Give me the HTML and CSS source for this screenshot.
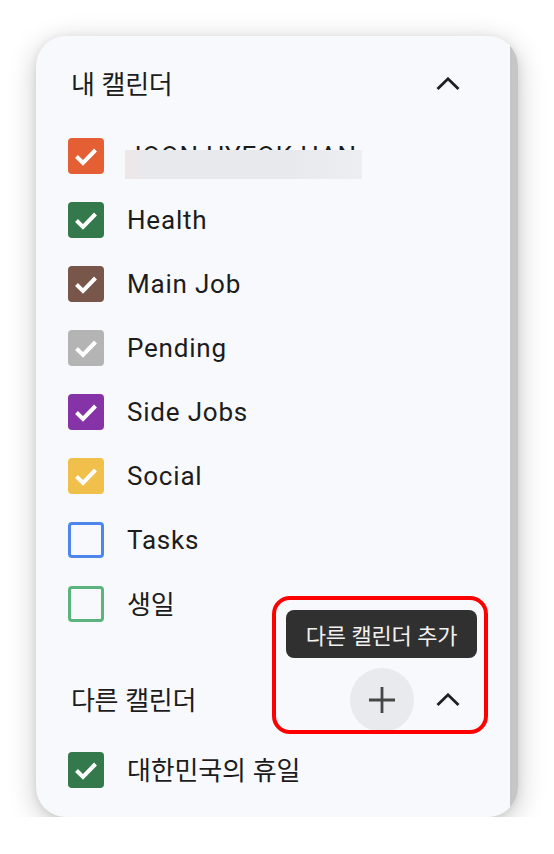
FILE: index.html
```html
<!DOCTYPE html>
<html lang="ko">
<head>
<meta charset="utf-8">
<link rel="stylesheet" href="styles.css">
</head>
<body>
<div class="card">
  <div class="content">
    <div class="section-head">
      <span class="section-title">내 캘린더</span>
      <button class="chev" aria-label="접기"><svg width="24" height="14" viewBox="0 0 24 14"><path d="M1.5 12 L12 1.8 L22.5 12" fill="none" stroke="#1f1f1f" stroke-width="2.8"/></svg></button>
    </div>
    <ul class="list">
      <li class="row"><span class="cb on" style="background:#e45f34"><svg viewBox="0 0 36 36"><path d="M8.5 18.5 L15 25 L27.5 12" /></svg></span><span class="label name">JOON HYEOK HAN</span><span class="blur"></span></li>
      <li class="row"><span class="cb on" style="background:#33794b"><svg viewBox="0 0 36 36"><path d="M8.5 18.5 L15 25 L27.5 12" /></svg></span><span class="label">Health</span></li>
      <li class="row"><span class="cb on" style="background:#785649"><svg viewBox="0 0 36 36"><path d="M8.5 18.5 L15 25 L27.5 12" /></svg></span><span class="label">Main Job</span></li>
      <li class="row"><span class="cb on" style="background:#b4b4b4"><svg viewBox="0 0 36 36"><path d="M8.5 18.5 L15 25 L27.5 12" /></svg></span><span class="label">Pending</span></li>
      <li class="row"><span class="cb on" style="background:#8633a8"><svg viewBox="0 0 36 36"><path d="M8.5 18.5 L15 25 L27.5 12" /></svg></span><span class="label">Side Jobs</span></li>
      <li class="row"><span class="cb on" style="background:#f0c04a"><svg viewBox="0 0 36 36"><path d="M8.5 18.5 L15 25 L27.5 12" /></svg></span><span class="label">Social</span></li>
      <li class="row"><span class="cb off" style="border-color:#4f86ec"></span><span class="label">Tasks</span></li>
      <li class="row"><span class="cb off" style="border-color:#5db37e"></span><span class="label ko">생일</span></li>
    </ul>
    <div class="section-head second">
      <span class="section-title">다른 캘린더</span>
      <div class="actions">
        <button class="add" aria-label="다른 캘린더 추가"><svg width="28" height="28" viewBox="0 0 28 28"><path d="M14 1 V27 M1 14 H27" stroke="#444746" stroke-width="2.8" fill="none"/></svg></button>
        <button class="chev" aria-label="접기"><svg width="24" height="14" viewBox="0 0 24 14"><path d="M1.5 12 L12 1.8 L22.5 12" fill="none" stroke="#1f1f1f" stroke-width="2.8"/></svg></button>
      </div>
      <div class="tooltip">다른 캘린더 추가</div>
      <div class="highlight"></div>
    </div>
    <ul class="list">
      <li class="row"><span class="cb on" style="background:#33794b"><svg viewBox="0 0 36 36"><path d="M8.5 18.5 L15 25 L27.5 12" /></svg></span><span class="label ko">대한민국의 휴일</span></li>
    </ul>
  </div>
  <div class="scrollbar"></div>
</div>
</body>
</html>
```
FILE: styles.css
```css
* { box-sizing: border-box; }
html, body { margin: 0; padding: 0; background: #ffffff; }
body {
  font-family: Roboto, "Noto Sans CJK KR", "Noto Sans", sans-serif;
  color: #1c1c1c;
  padding: 36px 0 0 36px;
}
.card {
  width: 482px;
  height: 781px;
  background: #f8f9fd;
  border-radius: 30px;
  overflow: hidden;
  display: flex;
  box-shadow: 0 6px 28px rgba(0,0,0,0.22), 0 2px 8px rgba(0,0,0,0.08);
}
.content {
  flex: 1;
  padding: 24px 0 0 0;
  position: relative;
}
.scrollbar {
  width: 8px;
  background: #c6c6c6;
  flex: none;
}
.section-head {
  height: 48px;
  display: flex;
  align-items: center;
  justify-content: space-between;
  padding: 0 38px 0 35px;
  position: relative;
}
.section-title {
  font-size: 26px;
  font-family: "Noto Sans CJK KR", Roboto, sans-serif;
  letter-spacing: -0.3px;
  position: relative;
  top: -2px;
}
button {
  border: none;
  background: none;
  padding: 0;
  display: flex;
  align-items: center;
  justify-content: center;
  cursor: pointer;
}
.chev { width: 48px; height: 48px; }
.list {
  list-style: none;
  margin: 16px 0 0 0;
  padding: 0;
}
.section-head.second { margin-top: 40px; }
.section-head.second + .list { margin-top: 14px; }
.row {
  height: 64px;
  display: flex;
  align-items: center;
  padding-left: 32px;
  position: relative;
}
.cb {
  width: 36px;
  height: 36px;
  border-radius: 4px;
  flex: none;
  display: flex;
}
.cb svg { width: 36px; height: 36px; }
.cb svg path { fill: none; stroke: #ffffff; stroke-width: 4; }
.cb.off { border: 3.5px solid; background: transparent; }
.label {
  margin-left: 23px;
  font-size: 26px;
  font-family: Roboto, "Noto Sans CJK KR", sans-serif;
  letter-spacing: 0.8px;
}
.label.ko {
  font-family: "Noto Sans CJK KR", sans-serif;
  letter-spacing: -0.2px;
  position: relative;
  top: -2px;
}
.name { letter-spacing: 0.8px; }
.blur {
  position: absolute;
  left: 89px;
  top: 26px;
  width: 237px;
  height: 29px;
  background: linear-gradient(90deg, #efe6e8 0%, #e8e9ec 10%, #e8e9ec 70%, #edeef1 100%);
}
.actions { display: flex; align-items: center; gap: 10px; margin-right: 0; }
.add {
  width: 64px;
  height: 64px;
  border-radius: 50%;
  background: #e9eaee;
}
.tooltip {
  position: absolute;
  left: 250px;
  top: -66px;
  width: 191px;
  height: 48px;
  background: #303030;
  color: #f2f2f2;
  border-radius: 8px;
  font-size: 22px;
  font-family: "Noto Sans CJK KR", sans-serif;
  letter-spacing: -0.3px;
  display: flex;
  align-items: center;
  justify-content: center;
}
.highlight {
  position: absolute;
  left: 236px;
  top: -80px;
  width: 216px;
  height: 138px;
  border: 4px solid #ff0000;
  border-radius: 18px;
  pointer-events: none;
}
```
